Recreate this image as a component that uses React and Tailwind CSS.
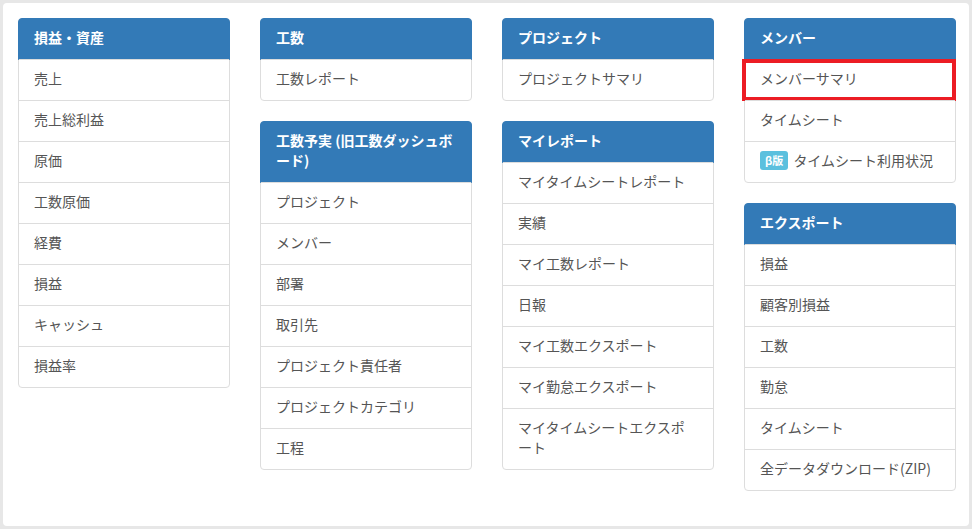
import React from 'react';

const groups = [
  [
    { title: '損益・資産', items: ['売上', '売上総利益', '原価', '工数原価', '経費', '損益', 'キャッシュ', '損益率'] },
  ],
  [
    { title: '工数', items: ['工数レポート'] },
    {
      title: '工数予実 (旧工数ダッシュボード)',
      items: ['プロジェクト', 'メンバー', '部署', '取引先', 'プロジェクト責任者', 'プロジェクトカテゴリ', '工程'],
    },
  ],
  [
    { title: 'プロジェクト', items: ['プロジェクトサマリ'] },
    {
      title: 'マイレポート',
      items: ['マイタイムシートレポート', '実績', 'マイ工数レポート', '日報', 'マイ工数エクスポート', 'マイ勤怠エクスポート', 'マイタイムシートエクスポート'],
    },
  ],
  [
    { title: 'メンバー', items: ['メンバーサマリ', 'タイムシート', 'タイムシート利用状況'] },
    { title: 'エクスポート', items: ['損益', '顧客別損益', '工数', '勤怠', 'タイムシート', '全データダウンロード(ZIP)'] },
  ],
];

function Item({ label }) {
  const highlighted = label === 'メンバーサマリ';
  const beta = label === 'タイムシート利用状況';
  return (
    <li className="relative border-t border-[#ddd] px-[15px] pt-[8px] pb-[12px] leading-5 text-[#555]">
      {beta && (
        <span className="mr-[5px] inline-block rounded-[3px] bg-[#5bc0de] px-[5px] text-[11px] font-bold leading-[19px] text-white align-[1px]">
          β版
        </span>
      )}
      {label}
      {highlighted && (
        <span className="pointer-events-none absolute -left-[3px] -right-[1px] -top-[1px] -bottom-[1px] border-4 border-[#ec1c24]" />
      )}
    </li>
  );
}

function Panel({ title, items }) {
  return (
    <div className="mb-5 rounded-[4px] border border-[#ddd] bg-white">
      <div className="-m-px rounded-t-[4px] border border-[#337ab7] bg-[#337ab7] px-[15px] pt-[8px] pb-[12px] font-semibold leading-5 text-white">
        {title}
      </div>
      <ul>
        {items.map((it, i) => (
          <Item key={i} label={it} />
        ))}
      </ul>
    </div>
  );
}

export default function App() {
  return (
    <div
      className="h-[529px] w-[972px] bg-[#e7e7e7] p-[3px] text-sm"
      style={{ fontFamily: '"Noto Sans CJK JP", "Noto Sans", sans-serif' }}
    >
      <div className="h-[523px] rounded-[4px] bg-white pl-[15px] pr-[13px] pt-[15px]">
        <div className="grid grid-cols-[repeat(4,212px)] gap-x-[30px]">
          {groups.map((col, ci) => (
            <div key={ci}>
              {col.map((p) => (
                <Panel key={p.title} title={p.title} items={p.items} />
              ))}
            </div>
          ))}
        </div>
      </div>
    </div>
  );
}
